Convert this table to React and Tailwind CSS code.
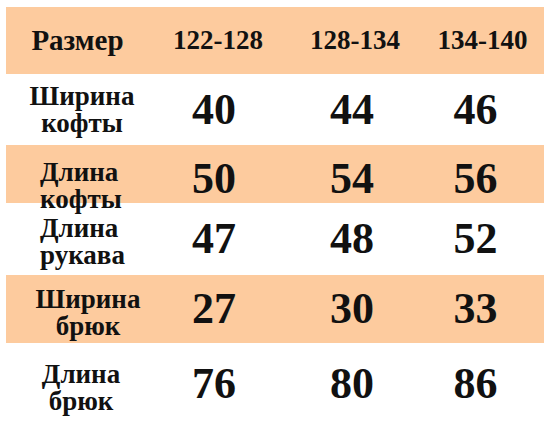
export default function App() {
  const rows = [
    { l1: "Ширина", l2: "кофты", align: "items-center pl-[7px]", vals: ["40", "44", "46"], peach: false, h: "h-[71px]" },
    { l1: "Длина", l2: "кофты", align: "items-start pl-[34px] pt-[14px]", vals: ["50", "54", "56"], peach: true, h: "h-[58px]" },
    { l1: "Длина", l2: "рукава", align: "items-start pl-[34px] pt-[6px]", vals: ["47", "48", "52"], peach: false, h: "h-[72px]" },
    { l1: "Ширина", l2: "брюк", align: "items-center pl-[19px] pt-[8px]", vals: ["27", "30", "33"], peach: true, h: "h-[68px]" },
    { l1: "Длина", l2: "брюк", align: "items-center pl-[5px] pt-[8px]", vals: ["76", "80", "86"], peach: false, h: "h-[81px]" },
  ]

  return (
    <div className="w-[550px] h-[425px] bg-white overflow-hidden pt-[7px] px-[6px] text-[#111] font-['Liberation_Serif','Times_New_Roman',serif]">
      {/* Header */}
      <div className="grid grid-cols-[145px_132px_138px_123px] h-[67px] bg-[#fdcb9e] items-center font-bold text-[27px]">
        <div className="text-center pr-[2px] text-[29px]">Размер</div>
        <div className="text-center pl-[2px]">122-128</div>
        <div className="text-center pl-[6px]">128-134</div>
        <div className="text-center">134-140</div>
      </div>

      {/* Rows */}
      {rows.map((row, i) => (
        <div
          key={i}
          className={`grid grid-cols-[145px_132px_138px_123px] items-center font-bold ${row.h} ${row.peach ? "bg-[#fdcb9e]" : "bg-white"}`}
        >
          <div className={`flex flex-col ${row.align} text-[27px] leading-[27px]`}>
            <span>{row.l1}</span>
            <span>{row.l2}</span>
          </div>
          <div className="text-center text-[44px] leading-none pr-[6px]">{row.vals[0]}</div>
          <div className="text-center text-[44px] leading-none">{row.vals[1]}</div>
          <div className="text-center text-[44px] leading-none pr-[14px]">{row.vals[2]}</div>
        </div>
      ))}
    </div>
  )
}
